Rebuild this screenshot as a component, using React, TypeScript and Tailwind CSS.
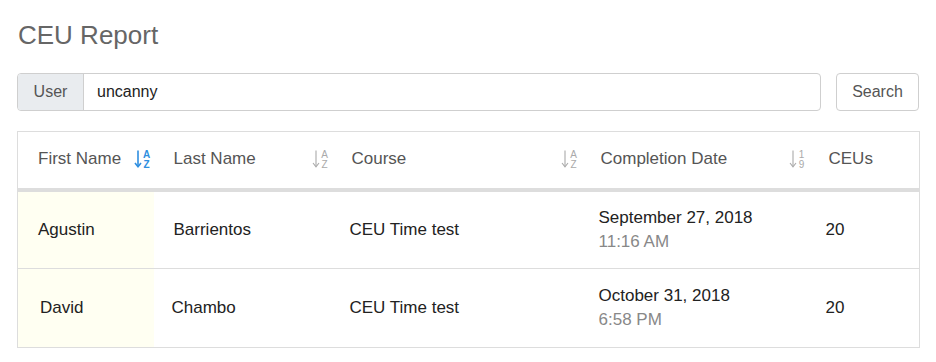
import React from "react";

function SortIcon({ active, num }: { active?: boolean; num?: boolean }) {
  const c = active ? "#2f8fe0" : "#aaaaaa";
  const sw = active ? 1.6 : 1.1;
  return (
    <svg width="18" height="20" viewBox="0 0 18 20" className="shrink-0">
      <line x1="4" y1="1.5" x2="4" y2="17.5" stroke={c} strokeWidth={sw} />
      <polyline points="1,14 4,17.8 7,14" fill="none" stroke={c} strokeWidth={sw} />
      <text x="12.5" y="8.5" fontSize="10" textAnchor="middle" fill={c} fontFamily="Liberation Sans, sans-serif" fontWeight={active ? 700 : 400}>
        {num ? "1" : "A"}
      </text>
      <text x="12.5" y="18.5" fontSize="10" textAnchor="middle" fill={c} fontFamily="Liberation Sans, sans-serif" fontWeight={active ? 700 : 400}>
        {num ? "9" : "Z"}
      </text>
    </svg>
  );
}

const headers = [
  { label: "First Name", w: "w-[136px]", active: true },
  { label: "Last Name", w: "w-[178px]" },
  { label: "Course", w: "w-[249px]" },
  { label: "Completion Date", w: "w-[228px]", num: true },
  { label: "CEUs", w: "", none: true },
];

const rows = [
  { first: "Agustin", last: "Barrientos", course: "CEU Time test", date: "September 27, 2018", time: "11:16 AM", ceu: "20", fpad: "pl-[20px]", lpad: "pl-[20px]" },
  { first: "David", last: "Chambo", course: "CEU Time test", date: "October 31, 2018", time: "6:58 PM", ceu: "20", fpad: "pl-[22px]", lpad: "pl-[18px]" },
];

export default function App() {
  return (
    <div className="min-h-[362px] bg-white px-[17px] pt-[18px] text-[16px]" style={{ fontFamily: "'Liberation Sans', Arial, sans-serif" }}>
      <h1 className="text-[26px] leading-[34px] text-[#666666] font-normal ml-[1px]">CEU Report</h1>
      <div className="mt-[21px] flex items-stretch h-[38px]">
        <div className="flex flex-1 items-stretch border border-[#cfcfcf] rounded-[4px] overflow-hidden">
          <div className="w-[66px] bg-[#e9ecef] border-r border-[#cfcfcf] flex items-center justify-center text-[#555] text-[16px]">User</div>
          <div className="flex-1 flex items-center pl-[13px] text-[#222] text-[16px]">uncanny</div>
        </div>
        <button className="ml-[15px] w-[83px] border border-[#cfcfcf] rounded-[4px] text-[#555] text-[16px] bg-white">Search</button>
      </div>
      <table className="mt-[20px] w-[903px] border-collapse border border-[#dddddd] table-fixed text-[17px]">
        <thead>
          <tr className="border-b-4 border-[#dddddd]">
            {headers.map((h, i) => (
              <th key={i} className={`${h.w} h-[58px] p-0 pb-[2px] font-normal text-left text-[#555]`}>
                <div className="flex items-center justify-between pl-[20px] pr-[2px]">
                  <span>{h.label}</span>
                  {!h.none && <SortIcon active={h.active} num={h.num} />}
                </div>
              </th>
            ))}
          </tr>
        </thead>
        <tbody>
          {rows.map((r, i) => (
            <tr key={i} className="h-[79px] border-b border-[#dddddd] text-[#222]">
              <td className={`h-[79px] p-0 bg-[#fffff2] ${r.fpad}`}>{r.first}</td>
              <td className={`p-0 ${r.lpad}`}>{r.last}</td>
              <td className="p-0 pl-[18px]">{r.course}</td>
              <td className="p-0 pl-[18px] leading-[24px]">
                <div>{r.date}</div>
                <div className="text-[#888]">{r.time}</div>
              </td>
              <td className="p-0 pl-[17px]">{r.ceu}</td>
            </tr>
          ))}
        </tbody>
      </table>
    </div>
  );
}
